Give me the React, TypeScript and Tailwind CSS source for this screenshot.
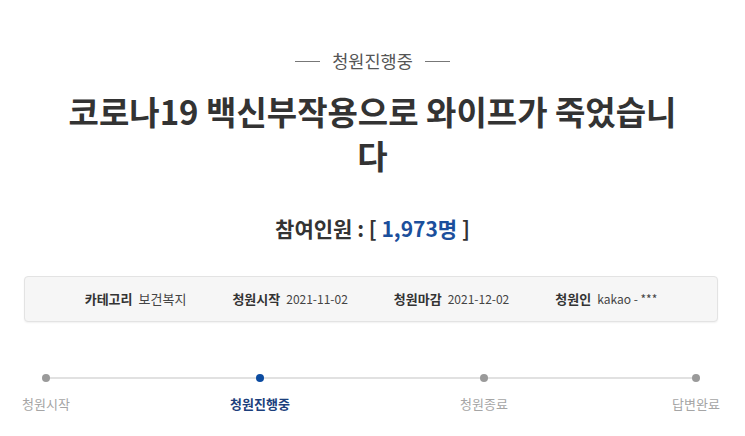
const steps = [
	{ label: '청원시작', offset: 'ml-[46px]', active: false },
	{ label: '청원진행중', offset: 'ml-[214px]', active: true },
	{ label: '청원종료', offset: 'ml-[224px]', active: false },
	{ label: '답변완료', offset: 'ml-[212px]', active: false },
];

const info = [
	{ label: '카테고리', value: '보건복지', date: false },
	{ label: '청원시작', value: '2021-11-02', date: true },
	{ label: '청원마감', value: '2021-12-02', date: true },
	{ label: '청원인', value: 'kakao - ***', date: true },
];

const App = () => {
	return (
		<div
			className="w-[745px] h-[436px] bg-white overflow-hidden text-[#333]"
			style={{ fontFamily: '"Noto Sans CJK KR", "Noto Sans", sans-serif' }}
		>
			<div className="pt-[49px] flex items-center justify-center gap-3 text-[17.5px] leading-6 text-[#555]">
				<span className="w-[25px] h-px bg-[#777]" />
				<span>청원진행중</span>
				<span className="w-[25px] h-px bg-[#777]" />
			</div>

			<h1 className="mt-4 mx-auto w-[615px] text-center font-bold text-[33px] leading-[44px] text-[#333]">
				코로나19 백신부작용으로 와이프가 죽었습니다
			</h1>

			<p className="mt-[37px] text-center font-bold text-[21px] leading-7 text-[#333]">
				참여인원 : [ <span className="text-[#1b4f9c]">1,973명</span> ]
			</p>

			<div className="mt-[34px] mx-[24px] w-[694px] h-[46px] rounded-[4px] border border-[#e3e3e3] bg-[#f6f6f6] shadow-[0_1px_2px_rgba(0,0,0,0.06)] flex items-center justify-center gap-[46px] text-[13px] text-[#333]">
				{info.map((item) => (
					<div key={item.label} className="flex items-center gap-[6px]">
						<span className="font-bold">{item.label}</span>
						<span className={item.date ? 'text-[12px] text-[#444]' : 'text-[#444]'}>{item.value}</span>
					</div>
				))}
			</div>

			<div className="mt-[52px] relative h-2 flex items-center">
				<div className="absolute left-[46px] right-[49px] top-[3px] h-[2px] bg-[#e1e1e1]" />
				{steps.map((step) => (
					<div key={step.label} className={`relative w-0 flex justify-center ${step.offset}`}>
						<span className={`shrink-0 w-2 h-2 rounded-full ${step.active ? 'bg-[#0b4ba0]' : 'bg-[#9a9a9a]'}`} />
					</div>
				))}
			</div>

			<div className="mt-3 flex h-5 items-center">
				{steps.map((step) => (
					<div key={step.label} className={`w-0 flex justify-center ${step.offset}`}>
						<span
							className={`shrink-0 whitespace-nowrap text-[13px] leading-5 ${
								step.active ? 'font-bold text-[#1c3f7c]' : 'text-[#a5a5a5]'
							}`}
						>
							{step.label}
						</span>
					</div>
				))}
			</div>
		</div>
	);
};

export default App;
